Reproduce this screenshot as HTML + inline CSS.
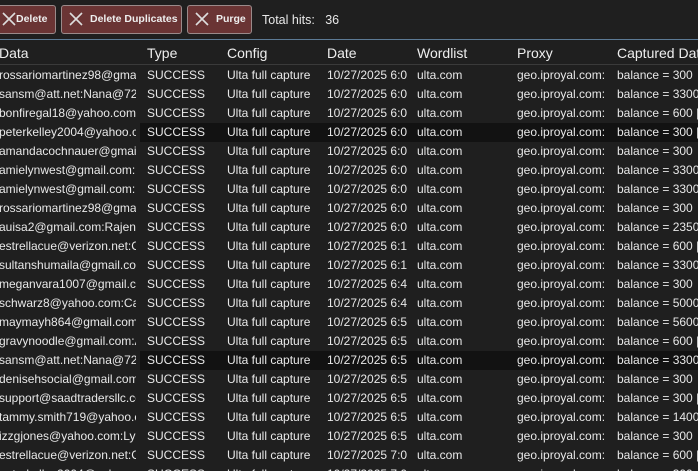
<html><head><style>
html,body{margin:0;width:698px;height:471px;overflow:hidden}
body{background:#1f1f1f;font-family:"Liberation Sans",sans-serif;color:#e8e8e8;position:relative}
.btn{position:absolute;top:5px;height:29px;background:#6a3434;border:1px solid #9a8a8a;border-radius:3px;box-sizing:border-box;font-size:10.5px;font-weight:bold;color:#eee;line-height:27px;white-space:nowrap}
.btn svg{position:absolute;left:6px;top:5px}
.btn span{position:absolute;left:28px}
.top{position:absolute;left:0;top:39px;width:698px;height:1px;background:#5c7a95}
.hdr{position:absolute;top:45px;font-size:14px;color:#eee;white-space:nowrap}
.hline{position:absolute;left:0;top:64px;width:698px;height:1px;background:#3a3a3a}
.row{position:absolute;left:0;width:698px;height:19px;font-size:12px;line-height:19px}
.row.d::before{content:"";position:absolute;left:140px;right:0;top:0;bottom:0;background:#121212}
.c{position:absolute;top:0;white-space:nowrap;overflow:hidden}
</style></head><body>
<div class="btn" style="left:-6px;width:62px"><svg width="16" height="16" viewBox="0 0 16 16"><path d="M2 2L14 14M14 2L2 14" stroke="#ddd" stroke-width="1.6"/></svg><span style="left:21px">Delete</span></div>
<div class="btn" style="left:61px;width:121px"><svg width="16" height="16" viewBox="0 0 16 16"><path d="M2 2L14 14M14 2L2 14" stroke="#ddd" stroke-width="1.6"/></svg><span>Delete Duplicates</span></div>
<div class="btn" style="left:187px;width:65px"><svg width="16" height="16" viewBox="0 0 16 16"><path d="M2 2L14 14M14 2L2 14" stroke="#ddd" stroke-width="1.6"/></svg><span>Purge</span></div>
<div style="position:absolute;left:262px;top:13px;font-size:12.5px">Total hits:&nbsp;&nbsp; 36</div>
<div class="top"></div>
<div class="hdr" style="left:-1px">Data</div>
<div class="hdr" style="left:147px">Type</div>
<div class="hdr" style="left:227px">Config</div>
<div class="hdr" style="left:327px">Date</div>
<div class="hdr" style="left:417px">Wordlist</div>
<div class="hdr" style="left:517px">Proxy</div>
<div class="hdr" style="left:617px">Captured Data</div>
<div class="hline"></div>
<div id="rows"></div>
<script>
var d=[["rossariomartinez98@gmail","6:0","300"],["sansm@att.net:Nana@727","6:0","3300"],["bonfiregal18@yahoo.com","6:0","600 |"],["peterkelley2004@yahoo.co","6:0","300 |"],["amandacochnauer@gmail","6:0","300"],["amielynwest@gmail.com:","6:0","3300"],["amielynwest@gmail.com:","6:0","3300"],["rossariomartinez98@gmai","6:0","300"],["auisa2@gmail.com:Rajend","6:0","2350"],["estrellacue@verizon.net:Cl","6:1","600 |"],["sultanshumaila@gmail.com","6:1","3300"],["meganvara1007@gmail.com","6:4","300"],["schwarz8@yahoo.com:Ca","6:4","5000"],["maymayh864@gmail.com","6:5","5600"],["gravynoodle@gmail.com:A","6:5","600 |"],["sansm@att.net:Nana@727","6:5","3300"],["denisehsocial@gmail.com","6:5","300"],["support@saadtradersllc.co","6:5","300 |"],["tammy.smith719@yahoo.c","6:5","1400"],["izzgjones@yahoo.com:Lyn","6:5","300"],["estrellacue@verizon.net:Cl","7:0","600 |"],["peterkelley2004@yahoo.co","7:0","300"]];
var h="";d.forEach(function(r,i){h+='<div class="row'+((i==3||i==15)?' d':'')+'" style="top:'+(66+i*19)+'px"><div class="c" style="left:-1px;width:137px">'+r[0]+'</div><div class="c" style="left:147px">SUCCESS</div><div class="c" style="left:227px">Ulta full capture</div><div class="c" style="left:327px;width:81px">10/27/2025 '+r[1]+'</div><div class="c" style="left:417px">ulta.com</div><div class="c" style="left:517px;width:91px">geo.iproyal.com:</div><div class="c" style="left:617px">balance = '+r[2]+'</div></div>';});
document.getElementById("rows").innerHTML=h;
</script>
</body></html>
